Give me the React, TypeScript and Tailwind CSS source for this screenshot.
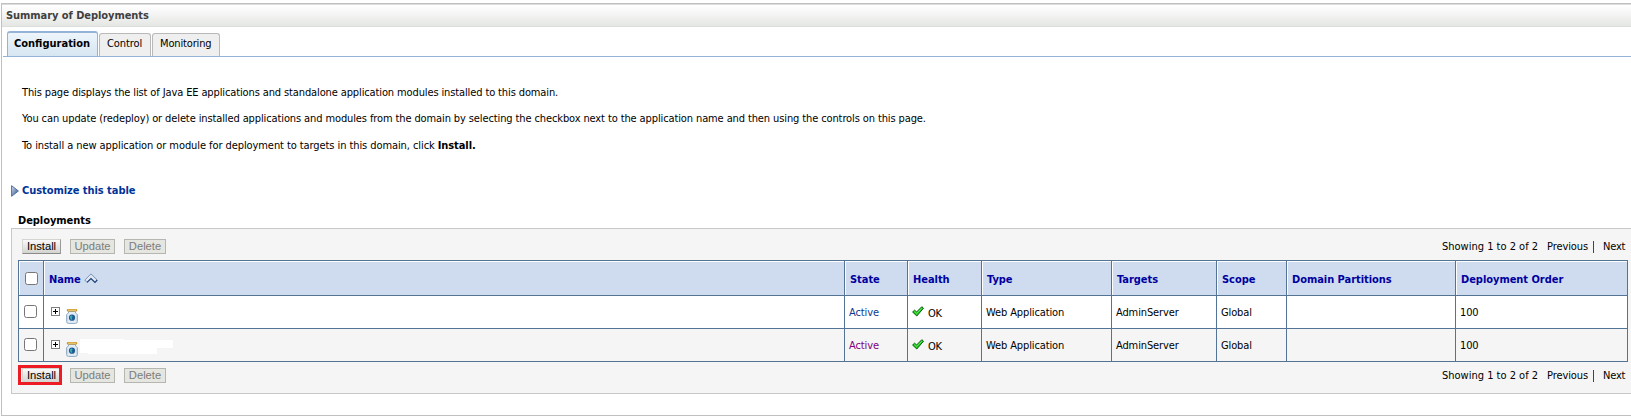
import React from 'react';

function Btn({ label, w, disabled }: { label: string; w: string; disabled?: boolean }) {
  return (
    <button
      className={
        w +
        " flex h-[15px] items-center justify-center border font-['Liberation_Sans'] text-[11.2px] leading-[13px] " +
        (disabled
          ? 'border-[#b6b6b0] bg-[#e5e6df] text-[#7c7c7c]'
          : 'border-[#d4d4d0] border-r-[#9a9a9a] border-b-[#8a8a8a] bg-linear-to-b from-[#fafafa] to-[#d3d4ce] text-black')
      }
    >
      {label}
    </button>
  );
}

function Bar({ marked }: { marked?: boolean }) {
  return (
    <div className="flex h-[15px] items-center justify-between">
      <div className="flex">
        <div className="relative mr-[9px]">
          <Btn label="Install" w="w-[39px]" />
          {marked && <span className="absolute -top-[3px] -left-[4px] h-[20px] w-[44px] border-[3px] border-[#ed1c24]" />}
        </div>
        <div className="mr-[9px]">
          <Btn label="Update" w="w-[45px]" disabled />
        </div>
        <Btn label="Delete" w="w-[42px]" disabled />
      </div>
      <div className="mr-[6px] flex items-center">
        <span className="mr-[10px] w-[95px] whitespace-nowrap">Showing 1 to 2 of 2</span>
        <span className="w-[41px] whitespace-nowrap tracking-[-0.1px]">Previous</span>
        <span className="mr-[9px] ml-[5px] h-[12px] w-px bg-[#444]" />
        <span className="w-[22px] whitespace-nowrap tracking-[-0.2px]">Next</span>
      </div>
    </div>
  );
}

function Check() {
  return <input type="checkbox" className="block size-[13px] appearance-none rounded-[2.5px] border border-[#767676] bg-white" />;
}

function Jar() {
  return (
    <svg width="12" height="16" viewBox="0 0 12 16">
      <path d="M2.500 3.500V5L.6 6.500V13.500q0 1.900 1.900 1.900h7q1.900 0 1.900-1.900V6.500L9.500 5V3.500z" fill="#e4edf5" stroke="#8fa9c2" />
      <path d="M1.700 7.500v6M10.300 7.500v6" stroke="#c3d5e6" />
      <rect x=".8" y="1" width="10.400" height="2.600" rx="1" fill="#c9982c" />
      <path d="M2 2.200h8" stroke="#f3dc92" strokeWidth=".9" />
      <circle cx="6" cy="9.700" r="3.100" fill="#1c5c92" />
      <path d="M4 8.200l1.800-.9.8 1.200-1 1.200.8 1.300-1 1-1.400-1.700z" fill="#43a9b4" />
    </svg>
  );
}

const cols = 'grid w-[1610px] grid-cols-[26px_801px_63px_74px_130px_105px_70px_169px_172px]';
const heads = ['State', 'Health', 'Type', 'Targets', 'Scope', 'Domain Partitions', 'Deployment Order'];

function Row({ visited }: { visited?: boolean }) {
  const cell = 'flex items-center border-r border-[#547496] pl-[4px] pt-[1px] tracking-[-0.12px]';
  return (
    <div className={cols + ' h-[33px] border-b border-[#547496] ' + (visited ? 'bg-[#f5f5f5]' : 'bg-white')}>
      <div className="flex items-start border-x border-[#547496] pt-[9px] pl-[5px]"><Check /></div>
      <div className="flex items-start border-r border-[#547496] pl-[7px]">
        <svg className="mt-[11px]" width="9" height="9" viewBox="0 0 9 9" shapeRendering="crispEdges">
          <rect x=".5" y=".5" width="8" height="8" fill="#fff" stroke="#808080" />
          <path d="M2 4.500h5M4.500 2v5" stroke="#000" />
        </svg>
        <div className="mt-[12px] ml-[6px]"><Jar /></div>
        {visited && (
          <svg className="mt-[10px] ml-[2px]" width="93" height="15" viewBox="0 0 93 15" shapeRendering="crispEdges">
            <path d="M0 0h44v1h49v8H77v6H8v-1H0z" fill="#fff" />
          </svg>
        )}
      </div>
      <div className={cell + (visited ? ' text-[#800080]' : ' text-[#0f3a8c]')}>Active</div>
      <div className={cell}>
        <svg className="-mt-[3px]" width="12" height="11" viewBox="0 0 12 11">
          <path d="M.6 6L2.600 4.200l2 1.800L9.800.7l1.700 1.500L4.800 10z" fill="#1fcf1f" stroke="#0a5c10" />
          <path d="M2.600 5.400l2 1.900 5.300-5.200" fill="none" stroke="#6bf06b" strokeWidth=".8" />
        </svg>
        <span className="mt-[2px] ml-[4px] tracking-[-0.3px]">OK</span>
      </div>
      <div className={cell}>Web Application</div>
      <div className={cell}>AdminServer</div>
      <div className={cell}>Global</div>
      <div className={cell} />
      <div className={cell}>100</div>
    </div>
  );
}

export default function App() {
  return (
    <div className="h-[416px] w-[1631px] overflow-hidden bg-white pt-[3px] pl-px font-['DejaVu_Sans_Condensed','DejaVu_Sans',sans-serif] text-[11px] leading-[13px] text-black">
      <div className="h-[413px] border-y border-l border-[#c0c0c0]">
        <h1 className="h-[23px] border-t border-b border-t-[#dcdcdc] border-b-[#dcdedb] bg-linear-to-b from-white to-[#e5e7e4] pt-[4px] pl-[4px] font-bold tracking-[-0.06px] text-[#404040]">Summary of Deployments</h1>
        <div className="ml-px flex h-[30px] items-end border-b border-[#95b3d7] pl-[4px]">
          <div className="mr-px h-[25px] w-[91px] rounded-t-[3px] border-x border-t-2 border-[#95b3d7] bg-linear-to-b from-[#eef5fb] to-[#d6e6f2] pt-[4px] pl-[6px] font-bold">Configuration</div>
          <div className="mr-px h-[23px] w-[52px] rounded-t-[3px] border border-b-0 border-[#b9b9b9] bg-[#efefef] pt-[3px] pl-[7px] tracking-[-0.1px]">Control</div>
          <div className="h-[23px] w-[68px] rounded-t-[3px] border border-b-0 border-[#b9b9b9] bg-[#efefef] pt-[3px] pl-[7px] tracking-[-0.15px]">Monitoring</div>
        </div>
        <div className="mt-[29px] ml-[20px] flex flex-col gap-[13px] whitespace-nowrap">
          <p className="tracking-[-0.12px]">This page displays the list of Java EE applications and standalone application modules installed to this domain.</p>
          <p className="tracking-[-0.112px]">You can update (redeploy) or delete installed applications and modules from the domain by selecting the checkbox next to the application name and then using the controls on this page.</p>
          <p className="mt-px tracking-[-0.08px]">To install a new application or module for deployment to targets in this domain, click <b>Install.</b></p>
        </div>
        <div className="mt-[32px] ml-[9px] flex h-[13px] items-center font-bold text-[#003399]">
          <svg width="8" height="12" viewBox="0 0 8 12">
            <defs>
              <linearGradient id="arrow" x1="0" y1="0" x2="1" y2="1">
                <stop offset="0" stopColor="#dbe7f5" />
                <stop offset="1" stopColor="#1f4580" />
              </linearGradient>
            </defs>
            <path d="M.6.7v10.600L7.400 6z" fill="url(#arrow)" stroke="#4c6fa3" strokeLinejoin="round" />
          </svg>
          <span className="ml-[3px] tracking-[-0.05px]">Customize this table</span>
        </div>
        <h2 className="mt-[17px] ml-[16px] font-bold tracking-[-0.05px]">Deployments</h2>
        <div className="mt-px ml-[9px] h-[166px] border-y border-l border-[#c8c8c8] bg-[#f5f5f5] pt-[10px]">
          <div className="ml-[10px]"><Bar /></div>
          <div className="mt-[6px] ml-[6px]">
            <div className={cols + ' h-[36px] border-y border-[#547496] font-bold text-[#0000a0]'}>
              <div className="flex items-center border-x border-[#547496] bg-[#cfdcef] pl-[6px] shadow-[inset_1px_1px_0_#fff]"><Check /></div>
              <div className="flex items-center border-r border-[#547496] bg-[#cfdcef] pt-[2px] pl-[5px] shadow-[inset_1px_1px_0_#fff]">
                <span className="tracking-[-0.1px]">Name</span>
                <svg className="-mt-[2px] ml-[3px]" width="14" height="11" viewBox="0 0 14 11">
                  <path d="M.8 7L7 .9 13.200 7l-2.200 2.400L7 5.500 3 9.400z" fill="#dfe8f5" stroke="#7089ad" strokeWidth=".9" />
                  <path d="M3 9.400L7 5.500l4 3.900L13.200 7" fill="none" stroke="#24477c" strokeWidth="1.200" />
                </svg>
              </div>
              {heads.map((h) => (
                <div key={h} className="flex items-center border-r border-[#547496] bg-[#cfdcef] pt-[2px] pl-[5px] tracking-[-0.04px] whitespace-nowrap shadow-[inset_1px_1px_0_#fff]">{h}</div>
              ))}
            </div>
            <Row />
            <Row visited />
          </div>
          <div className="mt-[6px] ml-[10px]"><Bar marked /></div>
        </div>
      </div>
    </div>
  );
}
